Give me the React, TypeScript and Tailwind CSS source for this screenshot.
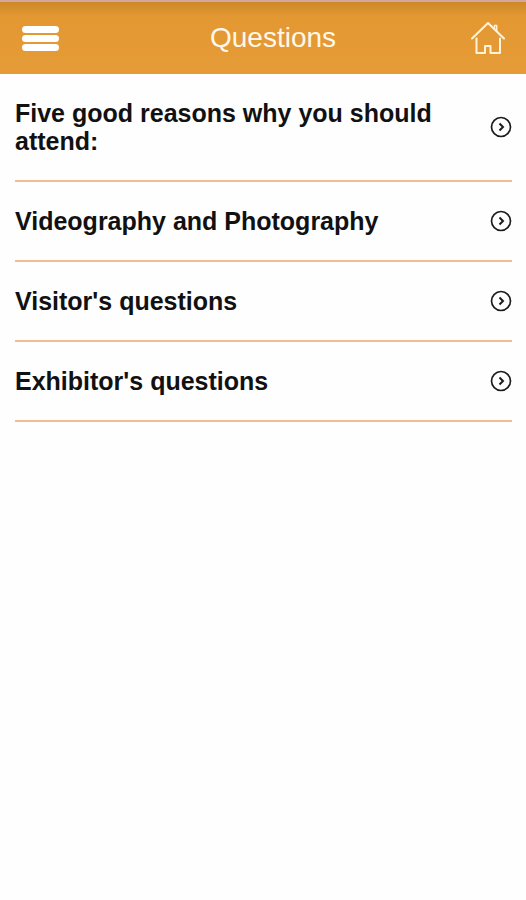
const questions = [
  { slug: "reasons", title: "Five good reasons why you should attend:" },
  { slug: "videography", title: "Videography and Photography" },
  { slug: "visitors", title: "Visitor's questions" },
  { slug: "exhibitors", title: "Exhibitor's questions" },
]

const HomeIcon = () => (
  <svg
    width="36"
    height="34"
    viewBox="0 0 36 34"
    fill="none"
    stroke="#fff3da"
    strokeWidth="2"
    strokeLinejoin="round"
    strokeLinecap="round"
    aria-hidden="true"
  >
    <path d="M2 17.5 18 2l16 15.5" />
    <path d="M24.5 8V4.5h2.2V10" strokeWidth="1.5" />
    <path d="M6.5 17.5V32H15v-7h5.5v7h9.5V17.5" />
  </svg>
)

const ArrowIcon = () => (
  <svg
    width="22"
    height="22"
    viewBox="0 0 22 22"
    fill="none"
    stroke="#1c1c1c"
    className="shrink-0"
    aria-hidden="true"
  >
    <circle cx="11" cy="11" r="9.5" strokeWidth="1.7" />
    <path d="m9.5 7.5 3.5 3.5-3.5 3.5" strokeWidth="2" />
  </svg>
)

const Header = () => (
  <header className="flex items-center h-[74px] px-5 border-t-2 border-[#d3a79b] bg-linear-to-b from-[#cc8829] via-[#e39832] via-20% to-[#e59b37]">
    <button
      type="button"
      aria-label="Menu"
      className="flex flex-col gap-0.5 w-14 pl-0.5 cursor-pointer"
    >
      <span className="w-[37px] h-[7px] rounded-full bg-white" />
      <span className="w-[37px] h-[7px] rounded-full bg-white" />
      <span className="w-[37px] h-[7px] rounded-full bg-white" />
    </button>
    <h1 className="flex-1 text-center text-[28px] leading-8 text-[#fff8ea]">
      Questions
    </h1>
    <a href="#home" aria-label="Home">
      <HomeIcon />
    </a>
  </header>
)

const App = () => {
  return (
    <div className="min-h-screen bg-[#fefefe] font-['Liberation_Sans',Arial,sans-serif]">
      <Header />
      <main>
        <ul className="pl-[15px] pr-[14px]">
          {questions.map((question) => (
            <li key={question.slug} className="border-b-2 border-[#f0bd91]">
              <a
                href={`#${question.slug}`}
                className="flex items-center justify-between gap-12 py-[25px] text-[25px] leading-7 font-bold text-[#111]"
              >
                {question.title}
                <ArrowIcon />
              </a>
            </li>
          ))}
        </ul>
      </main>
    </div>
  )
}

export default App
